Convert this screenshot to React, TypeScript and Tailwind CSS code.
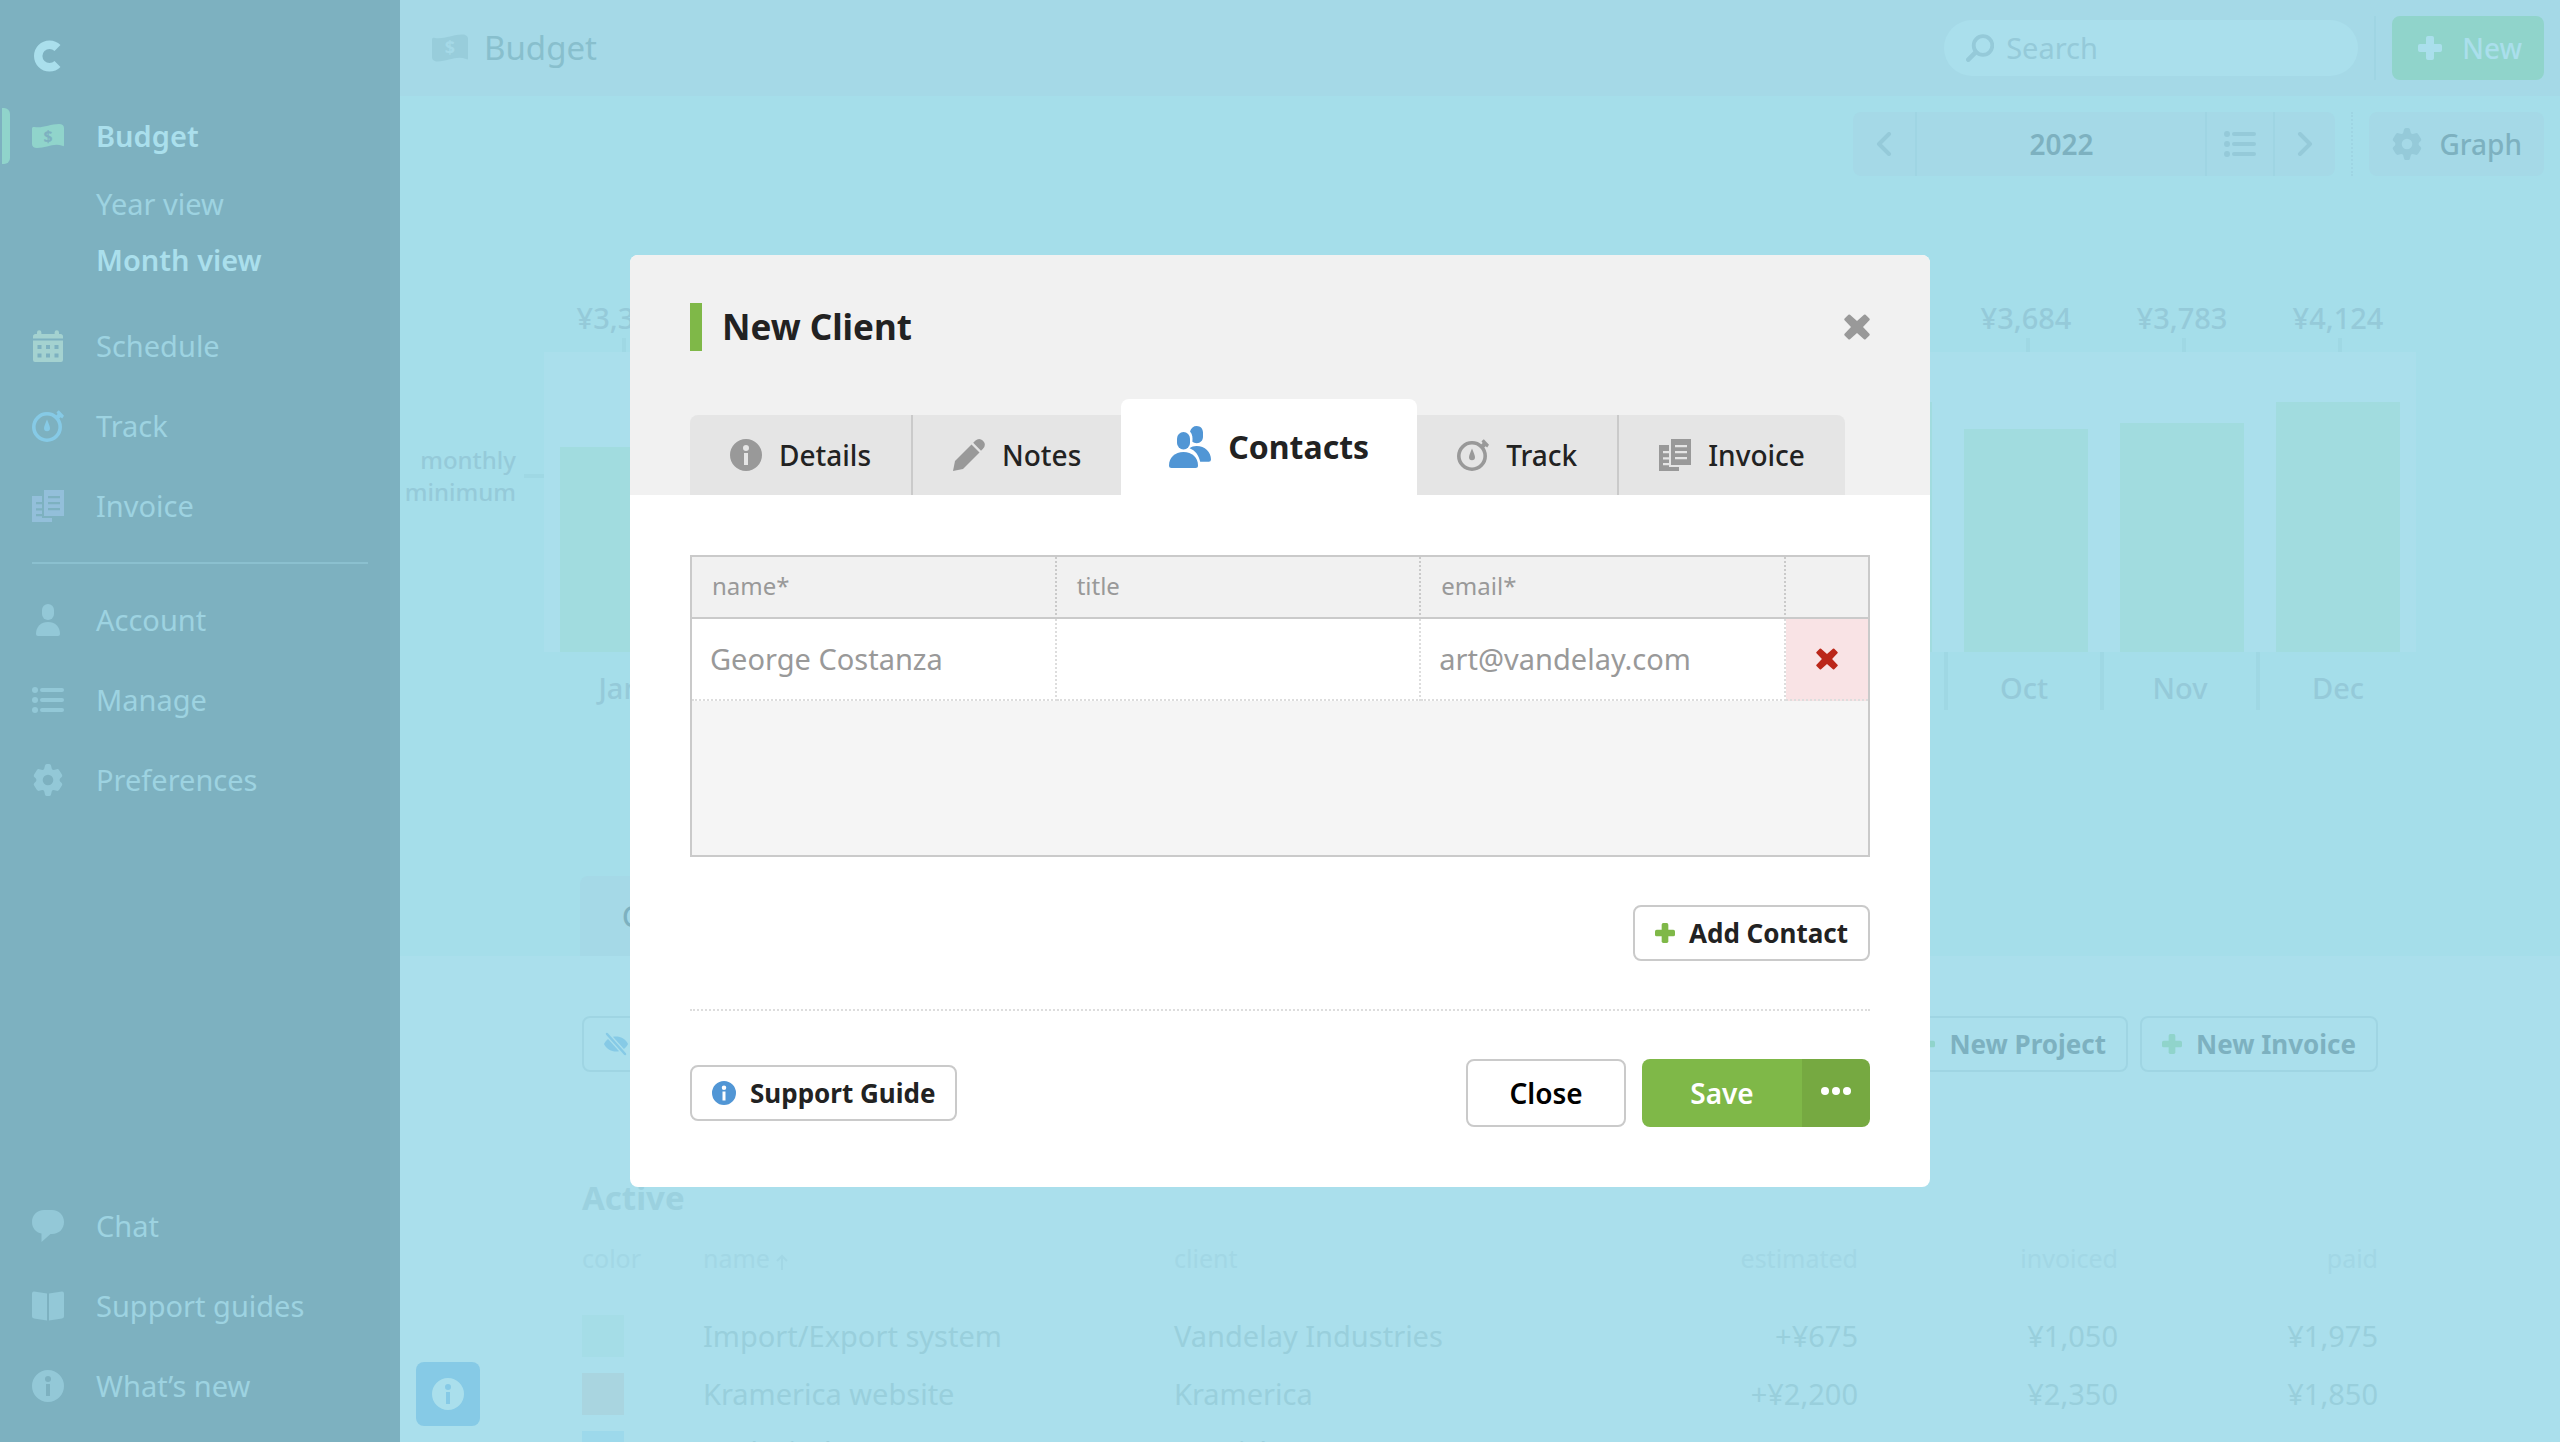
import { useState } from 'react';
import type { ReactNode } from 'react';
import clsx from 'clsx';

type IconProps = { className?: string };

function Svg({ className, children, box = '0 0 32 32' }: IconProps & { children: ReactNode; box?: string }) {
  return (
    <svg viewBox={box} fill="currentColor" aria-hidden="true" className={clsx('shrink-0', className)}>
      {children}
    </svg>
  );
}

function Logo({ className }: IconProps) {
  return (
    <Svg className={className} box="0 0 28 32">
      <path d="M23.5 8a11.300 11.300 0 1 0 0 16" fill="none" stroke="currentColor" strokeWidth="8.400" />
    </Svg>
  );
}

function MoneyIcon({ className, hole }: IconProps & { hole: string }) {
  return (
    <Svg className={className}>
      <path d="M0 8.6C0 7.2 1 6.7 2.5 7 10 8.6 18 4 27 4c3 0 5 1.500 5 4v17c0 1.300-.6 1.400-1.700.8C22 22.500 14 28 5 28c-3 0-5-1.500-5-4z" />
      <text x="16" y="21.500" textAnchor="middle" fontSize="16" fontWeight="700" fontFamily="Noto Sans" fill={hole}>
        $
      </text>
    </Svg>
  );
}

function CalendarIcon({ className }: IconProps) {
  return (
    <Svg className={className}>
      <path d="M1 8.500V6.500C1 5 2 4 3.500 4H5V2.500a2.200 2.200 0 0 1 4.400 0V4h13.200V2.500a2.200 2.200 0 0 1 4.400 0V4h1.500C30 4 31 5 31 6.500v2z" />
      <path
        fillRule="evenodd"
        d="M1 10.500h30V30q0 2-2 2H3q-2 0-2-2zM5.500 15v4h4v-4zm8.500 0v4h4v-4zm8.500 0v4h4v-4zM5.500 23.500v4h4v-4zm8.500 0v4h4v-4zm8.500 0v4h4v-4z"
      />
    </Svg>
  );
}

function TrackIcon({ className }: IconProps) {
  return (
    <Svg className={className}>
      <circle cx="15" cy="17" r="13.200" fill="none" stroke="currentColor" strokeWidth="3.600" />
      <path d="M15 9.500c1.600 4 3 6.800 3 8.800a3 3 0 0 1-6 0c0-2 1.400-4.800 3-8.800z" />
      <path d="M24.500 2.200 26.800.2 32 5.800l-1.800 2.600-1.600-1.200-2.600 2.600-3-3 2.600-2.800z" />
    </Svg>
  );
}

function InvoiceIcon({ className }: IconProps) {
  return (
    <Svg className={className}>
      <path d="M0 6h10v6H4v2.200h6v4H4v2.200h6v3.600H4v2.200h6V28h10v4H0z" />
      <path fillRule="evenodd" d="M12 0h20v26H12zm4 6v2.200h12V6zm0 6v2.200h12V12zm0 6v2.200h12V18z" />
    </Svg>
  );
}

function PersonIcon({ className }: IconProps) {
  return (
    <Svg className={className}>
      <rect x="10" y="0" width="12" height="16" rx="6" />
      <path d="M4 30c0-7.500 5-12 12-12s12 4.500 12 12q0 2-2 2H6q-2 0-2-2z" />
    </Svg>
  );
}

function PeopleIcon({ className }: IconProps) {
  return (
    <Svg className={className} box="0 0 42 42">
      <path d="M21 5.500C22 2 24.500 0 27.700 0 31.500 0 34 2.800 34 6.500v4.300c0 3.700-2.500 6.400-6.300 6.400-1.800 0-3.200-.5-4.300-1.400.4-4.300.2-7.300-2.400-10.300z" />
      <path d="M20.500 22.200c2-1.500 4.300-2.200 7-2.200C36 20 42 26 42 33.500q0 2.200-2.200 2.200h-8.600c-1.400-6.500-5-11.400-10.700-13.500z" />
      <rect x="8" y="6" width="13" height="17.500" rx="6.500" />
      <path d="M0 39.500C0 31.500 6 26 14.500 26S29 31.500 29 39.500q0 2.500-2.500 2.500h-24Q0 42 0 39.500z" />
    </Svg>
  );
}

function ListIcon({ className }: IconProps) {
  return (
    <Svg className={className}>
      {[6, 16, 26].map((y) => (
        <g key={y}>
          <circle cx="3" cy={y} r="3" />
          <rect x="8" y={y - 2} width="24" height="4" rx="2" />
        </g>
      ))}
    </Svg>
  );
}

function GearIcon({ className }: IconProps) {
  return (
    <Svg className={className}>
      <path
        fillRule="evenodd"
        d="M13 1.500Q13.300 0 14.800 0h2.400q1.500 0 1.800 1.500l.8 3.200q.5 1.300 1.900 1.300l3-.8q1.600-.4 2.500 1l2.700 4.300q.9 1.500-.2 2.500l-1.600 1.500q-1.200 1.500 0 3l1.600 1.500q1.100 1 .2 2.500l-2.700 4.300q-.9 1.400-2.500 1l-3-.8q-1.400 0-1.900 1.300l-.8 3.200q-.3 1.500-1.800 1.500h-2.400q-1.500 0-1.800-1.500l-.8-3.200Q11.700 26 10.300 26l-3 .8q-1.600.4-2.500-1l-2.700-4.300q-.9-1.500.2-2.500l1.600-1.500q1.200-1.500 0-3L2.300 13q-1.100-1-.2-2.500l2.700-4.300q.9-1.400 2.500-1l3 .8q1.400 0 1.900-1.300zM16 10.700a5.300 5.300 0 1 0 0 10.600 5.300 5.300 0 0 0 0-10.600z"
      />
    </Svg>
  );
}

function ChatIcon({ className }: IconProps) {
  return (
    <Svg className={className}>
      <path d="M12 0h8c7 0 12 5 12 12s-5 12-12 12h-1.500L9.500 32v-8.400C4 22.500 0 18 0 12 0 5 5 0 12 0z" />
    </Svg>
  );
}

function BookIcon({ className }: IconProps) {
  return (
    <Svg className={className}>
      <path d="M2 1.500 15 3.500v27L2 28.500Q0 28 0 26.500v-23Q0 1.500 2 1.500zM30 1.500 17 3.500v27l13-2q2-.5 2-2v-23q0-2-2-2z" />
    </Svg>
  );
}

function InfoIcon({ className }: IconProps) {
  return (
    <Svg className={className}>
      <path
        fillRule="evenodd"
        d="M16 0a16 16 0 1 0 0 32 16 16 0 0 0 0-32zm0 6a3 3 0 1 1 0 6 3 3 0 0 1 0-6zm-2 8h4v12h-4z"
      />
    </Svg>
  );
}

function PencilIcon({ className }: IconProps) {
  return (
    <Svg className={className}>
      <path d="M0 32 2 22 18.500 5.500l8 8L10 30zM20.200 3.800l2-2q4-3.500 7.800 0 3.700 4 0 8l-2 2z" />
    </Svg>
  );
}

function SearchIcon({ className }: IconProps) {
  return (
    <Svg className={className} box="0 0 28 28">
      <circle cx="17" cy="11.500" r="9.300" fill="none" stroke="currentColor" strokeWidth="3.800" />
      <path d="m2.300 25.700 7.500-7.500" stroke="currentColor" strokeWidth="4.600" strokeLinecap="round" />
    </Svg>
  );
}

function PlusIcon({ className }: IconProps) {
  return (
    <Svg className={className} box="0 0 24 24">
      <rect x="8" width="8" height="24" rx="2" />
      <rect y="8" width="24" height="8" rx="2" />
    </Svg>
  );
}

function CrossIcon({ className }: IconProps) {
  return (
    <Svg className={className} box="0 0 26 26">
      <path d="M6 .8 13 7 20 .8q.8-.7 1.600 0l3.800 3.800q.7.8 0 1.600L19 13l6.400 6.800q.7.8 0 1.600l-3.800 3.800q-.8.700-1.600 0L13 19l-7 6.200q-.8.700-1.600 0L.6 21.400q-.7-.8 0-1.600L7 13 .6 6.200q-.7-.8 0-1.600L4.400.8q.8-.7 1.600 0z" />
    </Svg>
  );
}

function ChevronIcon({ className, flip }: IconProps & { flip?: boolean }) {
  return (
    <svg viewBox="0 0 16 24" aria-hidden="true" fill="none" stroke="currentColor" strokeWidth="4" strokeLinecap="round" strokeLinejoin="round" className={className}>
      <path d={flip ? 'M3 2l10 10L3 22' : 'M13 2 3 12l10 10'} />
    </svg>
  );
}

function SortIcon({ className }: IconProps) {
  return (
    <svg viewBox="0 0 12 16" aria-hidden="true" fill="none" stroke="currentColor" strokeWidth="2" className={className}>
      <path d="M6 16V2M1 7l5-5 5 5" />
    </svg>
  );
}

function EyeOffIcon({ className }: IconProps) {
  return (
    <Svg className={className} box="0 0 24 24">
      <path d="M0 12C3 6.500 7 4.500 12 4.500S21 6.500 24 12c-3 5.500-7 7.500-12 7.500S3 17.500 0 12z" />
      <path d="M3 2l18 20" stroke="#aadfec" strokeWidth="5" />
      <path d="M3 2l18 20" stroke="currentColor" strokeWidth="2.500" strokeLinecap="round" />
    </Svg>
  );
}

const PRIMARY_NAV = [
  { label: 'Schedule', icon: <CalendarIcon className="size-8 text-[#a4d2d0]" /> },
  { label: 'Track', icon: <TrackIcon className="size-8 text-[#86cae6]" /> },
  { label: 'Invoice', icon: <InvoiceIcon className="size-8 text-[#93bfda]" /> },
];

const SECONDARY_NAV = [
  { label: 'Account', icon: <PersonIcon className="size-8 text-[#93c8d7]" /> },
  { label: 'Manage', icon: <ListIcon className="size-8 text-[#93c8d7]" /> },
  { label: 'Preferences', icon: <GearIcon className="size-8 text-[#93c8d7]" /> },
];

const HELP_NAV = [
  { label: 'Chat', icon: <ChatIcon className="size-8 text-[#93c8d7]" /> },
  { label: 'Support guides', icon: <BookIcon className="size-8 text-[#93c8d7]" /> },
  { label: 'What’s new', icon: <InfoIcon className="size-8 text-[#93c8d7]" /> },
];

const MONTHS = [
  { name: 'Jan', total: 3382 },
  { name: 'Feb', total: 3460 },
  { name: 'Mar', total: 3512 },
  { name: 'Apr', total: 3275 },
  { name: 'May', total: 3640 },
  { name: 'Jun', total: 3820 },
  { name: 'Jul', total: 3555 },
  { name: 'Aug', total: 3910 },
  { name: 'Sep', total: 4124 },
  { name: 'Oct', total: 3684 },
  { name: 'Nov', total: 3783 },
  { name: 'Dec', total: 4124 },
];

const CHART_MAX = 4950;

const PROJECTS = [
  { color: 'bg-[#a5dde7]', name: 'Import/Export system', client: 'Vandelay Industries', estimated: '+¥675', invoiced: '¥1,050', paid: '¥1,975' },
  { color: 'bg-[#a9d5e0]', name: 'Kramerica website', client: 'Kramerica', estimated: '+¥2,200', invoiced: '¥2,350', paid: '¥1,850' },
  { color: 'bg-[#9dd9eb]', name: 'Sock Finder', client: 'Mr. Fisher', estimated: '+¥4,585', invoiced: '¥1,380', paid: '¥950' },
];

type NavItem = { label: string; icon: ReactNode };

function NavRow({ label, icon }: NavItem) {
  return (
    <li>
      <a href="#" className="flex h-20 items-center gap-8 pl-8 text-[29px] text-[#9dd3e1]">
        {icon}
        <span>{label}</span>
      </a>
    </li>
  );
}

function Sidebar() {
  return (
    <nav className="flex w-[400px] shrink-0 flex-col bg-[#7db1c0] pb-4">
      <div className="flex h-24 items-center pt-4 pl-[34px]">
        <Logo className="h-8 w-7 text-[#aadfec]" />
      </div>
      <div className="relative">
        <span className="absolute top-3 left-0.5 h-14 w-2 rounded-r-md bg-[#90d4cb]" />
        <a href="#" className="flex h-20 items-center gap-8 pl-8 text-[29px] font-semibold text-[#aadfec]">
          <MoneyIcon className="size-8 text-[#90d4cb]" hole="#7db1c0" />
          <span>Budget</span>
        </a>
        <ul className="pb-[18px] pl-24 text-[29px] leading-[56px]">
          <li>
            <a href="#" className="text-[#9dd3e1]">Year view</a>
          </li>
          <li>
            <a href="#" className="font-semibold text-[#aadfec]">Month view</a>
          </li>
        </ul>
      </div>
      <ul>
        {PRIMARY_NAV.map((item) => (
          <NavRow key={item.label} {...item} />
        ))}
      </ul>
      <hr className="mx-8 mt-4 mb-4 border-t-2 border-[#8bc0cf]" />
      <ul>
        {SECONDARY_NAV.map((item) => (
          <NavRow key={item.label} {...item} />
        ))}
      </ul>
      <ul className="mt-auto">
        {HELP_NAV.map((item) => (
          <NavRow key={item.label} {...item} />
        ))}
      </ul>
    </nav>
  );
}

function TopBar() {
  return (
    <header className="flex h-24 shrink-0 items-center bg-[#a5d9e7] pr-4 pl-8">
      <MoneyIcon className="size-9 text-[#98cddb]" hole="#a5d9e7" />
      <h1 className="ml-4 text-[33px] text-[#88bfcd]">Budget</h1>
      <label className="ml-auto flex h-14 w-[414px] items-center gap-3 rounded-full bg-[#aadfec] px-[22px] text-[#95cad9]">
        <SearchIcon className="size-7" />
        <input
          type="search"
          aria-label="Search"
          placeholder="Search"
          className="h-12 min-w-0 flex-1 bg-transparent pb-0.5 text-[29px] outline-none placeholder:text-[#95cad9]"
        />
      </label>
      <span className="mx-4 h-16 w-0.5 bg-[#9fd5e3]" />
      <button type="button" className="flex h-16 items-center gap-5 rounded-lg bg-[#90d4cb] pr-[22px] pl-[26px] text-[28px] font-medium text-[#aadfec]">
        <PlusIcon className="size-6" />
        New
      </button>
    </header>
  );
}

function Toolbar() {
  return (
    <div className="flex h-24 items-end justify-end pt-4 pr-4 pb-4">
      <div className="flex h-16 divide-x-2 divide-[#9fd5e3] rounded-lg bg-[#a5d9e7] text-[#95cad9]">
        <button type="button" aria-label="Previous year" className="flex w-16 items-center justify-center">
          <ChevronIcon className="h-6 w-4" />
        </button>
        <button type="button" className="w-[290px] text-[28px] font-semibold text-[#7db1c0]">2022</button>
        <button type="button" aria-label="List years" className="flex w-[68px] items-center justify-center">
          <ListIcon className="size-8" />
        </button>
        <button type="button" aria-label="Next year" className="flex w-[60px] items-center justify-center">
          <ChevronIcon className="h-6 w-4" flip />
        </button>
      </div>
      <span className="mx-4 h-16 border-l-2 border-dotted border-[#9fd5e3]" />
      <button type="button" className="flex h-16 items-center gap-4 rounded-lg bg-[#a5d9e7] px-[22px] text-[28px] font-medium text-[#7db1c0]">
        <GearIcon className="size-8 text-[#95cad9]" />
        Graph
      </button>
    </div>
  );
}

function MonthChart() {
  return (
    <div className="flex pr-36 text-[#95cad9]">
      <div className="flex w-36 shrink-0 items-center gap-2 self-start pt-[146px] text-right text-[24px] leading-8 font-medium">
        <span className="flex-1">monthly minimum</span>
        <span className="h-1 w-5 bg-[#9fd8e4]" />
      </div>
      <div className="flex-1">
        <div className="grid grid-cols-12 text-[29px] leading-10 font-medium">
          {MONTHS.map((m) => (
            <div key={m.name} className="text-center">
              ¥{m.total.toLocaleString('en-US')}
              <span className="ml-[50%] block h-3.5 w-1 bg-[#9fd8e4]" />
            </div>
          ))}
        </div>
        <div className="grid h-[300px] grid-cols-12 items-end bg-[#aadfec]">
          {MONTHS.map((m) => (
            <div key={m.name} className="mx-4 bg-[#a1dcdf]" style={{ height: `${(m.total / CHART_MAX) * 100}%` }} />
          ))}
        </div>
        <div className="grid grid-cols-12 divide-x-4 divide-[#9fd8e4] text-[29px] font-medium">
          {MONTHS.map((m) => (
            <div key={m.name} className="h-[58px] pt-3.5 text-center">{m.name}</div>
          ))}
        </div>
      </div>
    </div>
  );
}

function ProjectTable() {
  return (
    <table className="w-full table-fixed text-left text-[29px] text-[#99cfdc]">
      <colgroup>
        <col className="w-[121px]" />
        <col className="w-[471px]" />
        <col />
        <col className="w-[212px]" />
        <col className="w-[260px]" />
        <col className="w-[260px]" />
      </colgroup>
      <thead className="text-[25px] text-[#a2d7e5]">
        <tr className="h-[86px] [&>th]:pb-3 [&>th]:font-normal">
          <th>color</th>
          <th>
            name <SortIcon className="inline h-4 w-3" />
          </th>
          <th>client</th>
          <th className="text-right">estimated</th>
          <th className="text-right">invoiced</th>
          <th className="text-right">paid</th>
        </tr>
      </thead>
      <tbody>
        {PROJECTS.map((p) => (
          <tr key={p.name} className="h-[58px] leading-10 [&>td]:pb-0.5">
            <td>
              <span className={clsx('block size-[42px]', p.color)} />
            </td>
            <td>{p.name}</td>
            <td>{p.client}</td>
            <td className="text-right">{p.estimated}</td>
            <td className="text-right">{p.invoiced}</td>
            <td className="text-right">{p.paid}</td>
          </tr>
        ))}
      </tbody>
    </table>
  );
}

function OutlineButton({ icon, children, faded }: { icon: ReactNode; children?: ReactNode; faded?: boolean }) {
  return (
    <button
      type="button"
      className={clsx(
        'flex h-14 items-center gap-3.5 rounded-lg border-2 px-5 text-[26px] font-bold',
        faded ? 'border-[#9fd5e3] text-[#7db1c0]' : 'border-[#cacaca] bg-white text-[#222]'
      )}
    >
      {icon}
      {children}
    </button>
  );
}

function BudgetPage() {
  return (
    <main className="flex min-w-0 flex-1 flex-col overflow-hidden bg-[#aadfec]">
      <TopBar />
      <section className="flex h-[860px] shrink-0 flex-col bg-[#a5deea]">
        <Toolbar />
        <div className="pt-[106px]">
          <MonthChart />
        </div>
        <div className="mt-auto flex pl-[180px]">
          <button type="button" className="h-20 rounded-t-lg bg-[#a5d9e7] px-[42px] text-[28px] font-medium text-[#7db1c0]">
            Current
          </button>
        </div>
      </section>
      <section className="px-[182px] pt-[60px]">
        <div className="flex gap-3">
          <OutlineButton faded icon={<EyeOffIcon className="size-6 text-[#86cae6]" />}>Hide</OutlineButton>
          <span className="flex-1" />
          <OutlineButton faded icon={<PlusIcon className="size-5 text-[#90d4cb]" />}>New Project</OutlineButton>
          <OutlineButton faded icon={<PlusIcon className="size-5 text-[#90d4cb]" />}>New Invoice</OutlineButton>
        </div>
        <h2 className="mt-[102px] text-[33px] leading-[48px] font-bold text-[#9bd1df]">Active</h2>
        <ProjectTable />
      </section>
      <button type="button" aria-label="Info" className="fixed bottom-4 left-[416px] flex size-16 items-center justify-center rounded-lg bg-[#86cae6] text-[#aadfec]">
        <InfoIcon className="size-8" />
      </button>
    </main>
  );
}

const TABS = [
  { label: 'Details', icon: InfoIcon },
  { label: 'Notes', icon: PencilIcon },
  { label: 'Contacts', icon: PeopleIcon },
  { label: 'Track', icon: TrackIcon },
  { label: 'Invoice', icon: InvoiceIcon },
];

function ModalTabs({ active, onChange }: { active: string; onChange: (label: string) => void }) {
  const activeIndex = TABS.findIndex((t) => t.label === active);
  return (
    <div role="tablist" className="flex h-24 items-end">
      {TABS.map(({ label, icon: Icon }, i) => {
        const isActive = i === activeIndex;
        return (
          <button
            key={label}
            type="button"
            role="tab"
            aria-selected={isActive}
            onClick={() => onChange(label)}
            className={clsx(
              'flex items-center gap-[17px] text-[#222]',
              isActive ? 'h-24 rounded-t-lg bg-white px-12 text-[32px] font-bold' : 'h-20 bg-[#e5e5e5] px-10 text-[28px] font-medium',
              i === 0 && 'rounded-tl-lg',
              i === TABS.length - 1 && 'rounded-tr-lg',
              !isActive && i !== activeIndex - 1 && i !== TABS.length - 1 && 'border-r-2 border-[#cacaca]'
            )}
          >
            <Icon className={isActive ? 'size-[42px] text-[#5196d5]' : 'size-8 text-[#999]'} />
            {label}
          </button>
        );
      })}
    </div>
  );
}

function ContactsTable() {
  return (
    <div className="h-[302px] border-2 border-[#cacaca] bg-[#f5f5f5]">
      <table className="w-full table-fixed border-separate border-spacing-0 text-left text-[#999]">
        <colgroup>
          <col />
          <col />
          <col />
          <col className="w-[82px]" />
        </colgroup>
        <thead className="bg-[#f1f1f1] text-[24px]">
          <tr className="h-[62px] [&>th]:border-b-2 [&>th]:border-[#cacaca] [&>th]:px-5 [&>th]:pb-0.5 [&>th]:font-normal">
            <th className="border-r-2 [border-right-style:dotted]">name*</th>
            <th className="border-r-2 [border-right-style:dotted]">title</th>
            <th className="border-r-2 [border-right-style:dotted]">email*</th>
            <th aria-label="Remove" />
          </tr>
        </thead>
        <tbody className="bg-white text-[29px]">
          <tr className="h-[82px] [&>td]:border-b-2 [&>td]:border-dotted [&>td]:border-[#ddd] [&>td]:p-0">
            <td className="border-r-2">
              <input aria-label="name" placeholder="George Costanza" className="block h-20 w-full px-[18px] pb-0.5 outline-none placeholder:text-[#999]" />
            </td>
            <td className="border-r-2">
              <input aria-label="title" className="block h-20 w-full px-[18px] pb-0.5 outline-none" />
            </td>
            <td className="border-r-2">
              <input aria-label="email" placeholder="art@vandelay.com" className="block h-20 w-full px-[18px] pb-0.5 outline-none placeholder:text-[#999]" />
            </td>
            <td className="bg-[#f9e3e5]">
              <button type="button" aria-label="Remove contact" className="flex h-20 w-full items-center justify-center text-[#bb271a]">
                <CrossIcon className="size-[22px]" />
              </button>
            </td>
          </tr>
        </tbody>
      </table>
    </div>
  );
}

function NewClientModal() {
  const [tab, setTab] = useState('Contacts');

  return (
    <div role="dialog" aria-labelledby="modal-title" className="w-[1300px] overflow-hidden rounded-lg bg-white text-[#222]">
      <div className="bg-[#f1f1f1] px-[60px] pt-12">
        <div className="mb-12 flex h-12 items-center">
          <span className="h-12 w-3 bg-[#7fb848]" />
          <h2 id="modal-title" className="ml-5 text-[35px] leading-[48px] font-bold">New Client</h2>
          <button type="button" aria-label="Close dialog" className="ml-auto text-[#999]">
            <CrossIcon className="size-[26px]" />
          </button>
        </div>
        <ModalTabs active={tab} onChange={setTab} />
      </div>
      <div className="p-[60px]">
        <ContactsTable />
        <div className="mt-12 flex justify-end">
          <OutlineButton icon={<PlusIcon className="size-5 text-[#7fb848]" />}>Add Contact</OutlineButton>
        </div>
        <hr className="my-12 border-t-2 border-dotted border-[#ddd]" />
        <div className="flex items-center gap-4">
          <OutlineButton icon={<InfoIcon className="size-6 text-[#5196d5]" />}>Support Guide</OutlineButton>
          <button type="button" className="ml-auto h-[68px] w-40 rounded-lg border-2 border-[#cacaca] text-[28px] font-semibold text-black">
            Close
          </button>
          <div className="flex h-[68px] overflow-hidden rounded-lg text-white">
            <button type="button" className="w-40 bg-[#7fb848] text-[28px] font-semibold">Save</button>
            <button type="button" aria-label="More save options" className="flex w-[68px] items-center justify-center gap-[3px] bg-[#76a941] pb-1">
              <span className="size-2 rounded-full bg-white" />
              <span className="size-2 rounded-full bg-white" />
              <span className="size-2 rounded-full bg-white" />
            </button>
          </div>
        </div>
      </div>
    </div>
  );
}

export default function App() {
  return (
    <div className="flex h-screen overflow-hidden font-['Noto_Sans',sans-serif]">
      <Sidebar />
      <BudgetPage />
      <div className="fixed inset-0 flex items-center justify-center">
        <NewClientModal />
      </div>
    </div>
  );
}
